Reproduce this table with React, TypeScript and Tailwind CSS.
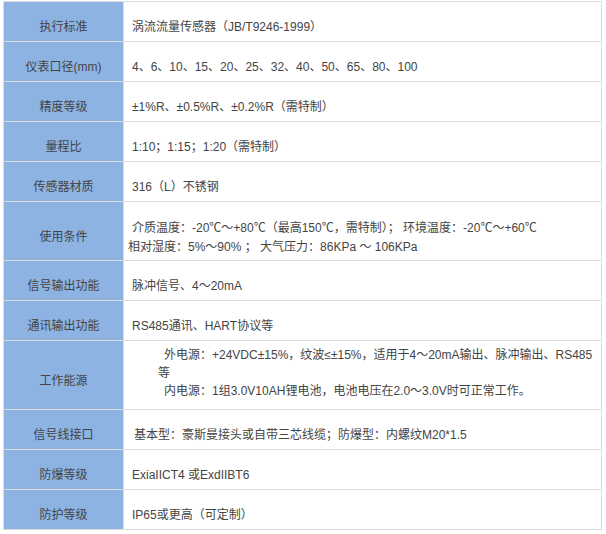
const rows: { label: string; h: string; body: React.ReactNode; cell?: string }[] = [
  { label: "执行标准", h: "h-[40px]", body: "涡流流量传感器（JB/T9246-1999）" },
  { label: "仪表口径(mm)", h: "h-[40px]", body: "4、6、10、15、20、25、32、40、50、65、80、100" },
  { label: "精度等级", h: "h-[40px]", body: "±1%R、±0.5%R、±0.2%R（需特制）" },
  { label: "量程比", h: "h-[40px]", body: "1:10；1:15；1:20（需特制）" },
  { label: "传感器材质", h: "h-[40px]", body: "316（L）不锈钢" },
  {
    label: "使用条件",
    h: "h-[59px]",
    cell: "pl-[4px] pt-[17px] align-top leading-[19px]",
    body: (
      <>
        <p className="indent-[4px]">介质温度：-20℃～+80℃（最高150℃，需特制）； 环境温度：-20℃～+60℃</p>
        <p>相对湿度：5%～90% ； 大气压力：86KPa ～ 106KPa</p>
      </>
    ),
  },
  { label: "信号输出功能", h: "h-[40px]", body: "脉冲信号、4～20mA" },
  { label: "通讯输出功能", h: "h-[40px]", body: "RS485通讯、HART协议等" },
  {
    label: "工作能源",
    h: "h-[69px]",
    cell: "pl-[34px] leading-[18px] align-top pt-[5px]",
    body: (
      <>
        <p className="indent-[6px] whitespace-nowrap">
          外电源：+24VDC±15%，纹波≤±15%，适用于4～20mA输出、脉冲输出、RS485
        </p>
        <p>等</p>
        <p className="indent-[6px]">内电源：1组3.0V10AH锂电池，电池电压在2.0～3.0V时可正常工作。</p>
      </>
    ),
  },
  {
    label: "信号线接口",
    h: "h-[40px]",
    cell: "pl-[10px] pt-[11px]",
    body: "基本型：豪斯曼接头或自带三芯线缆；防爆型：内螺纹M20*1.5",
  },
  { label: "防爆等级", h: "h-[40px]", body: "ExiaIICT4 或ExdIIBT6" },
  { label: "防护等级", h: "h-[40px]", body: "IP65或更高（可定制）" },
];

export default function App() {
  return (
    <div className="min-h-[534px] w-[606px] bg-white pt-[1px] pl-[3px] text-[12px] text-[#444] [font-family:'Liberation_Sans','Noto_Sans_CJK_SC',sans-serif]">
      <table className="w-[599px] table-fixed border-collapse">
        <colgroup>
          <col className="w-[120px]" />
          <col />
        </colgroup>
        <tbody>
          {rows.map((r) => (
            <tr key={r.label}>
              <td className={`${r.h} border border-[#dcdcdc] bg-[#8db3e2] pt-[11px] text-center align-middle`}>
                {r.label}
              </td>
              <td className={`${r.h} border border-[#dcdcdc] ${r.cell ?? "pl-[8px] pt-[11px] align-middle"}`}>
                {r.body}
              </td>
            </tr>
          ))}
        </tbody>
      </table>
    </div>
  );
}
